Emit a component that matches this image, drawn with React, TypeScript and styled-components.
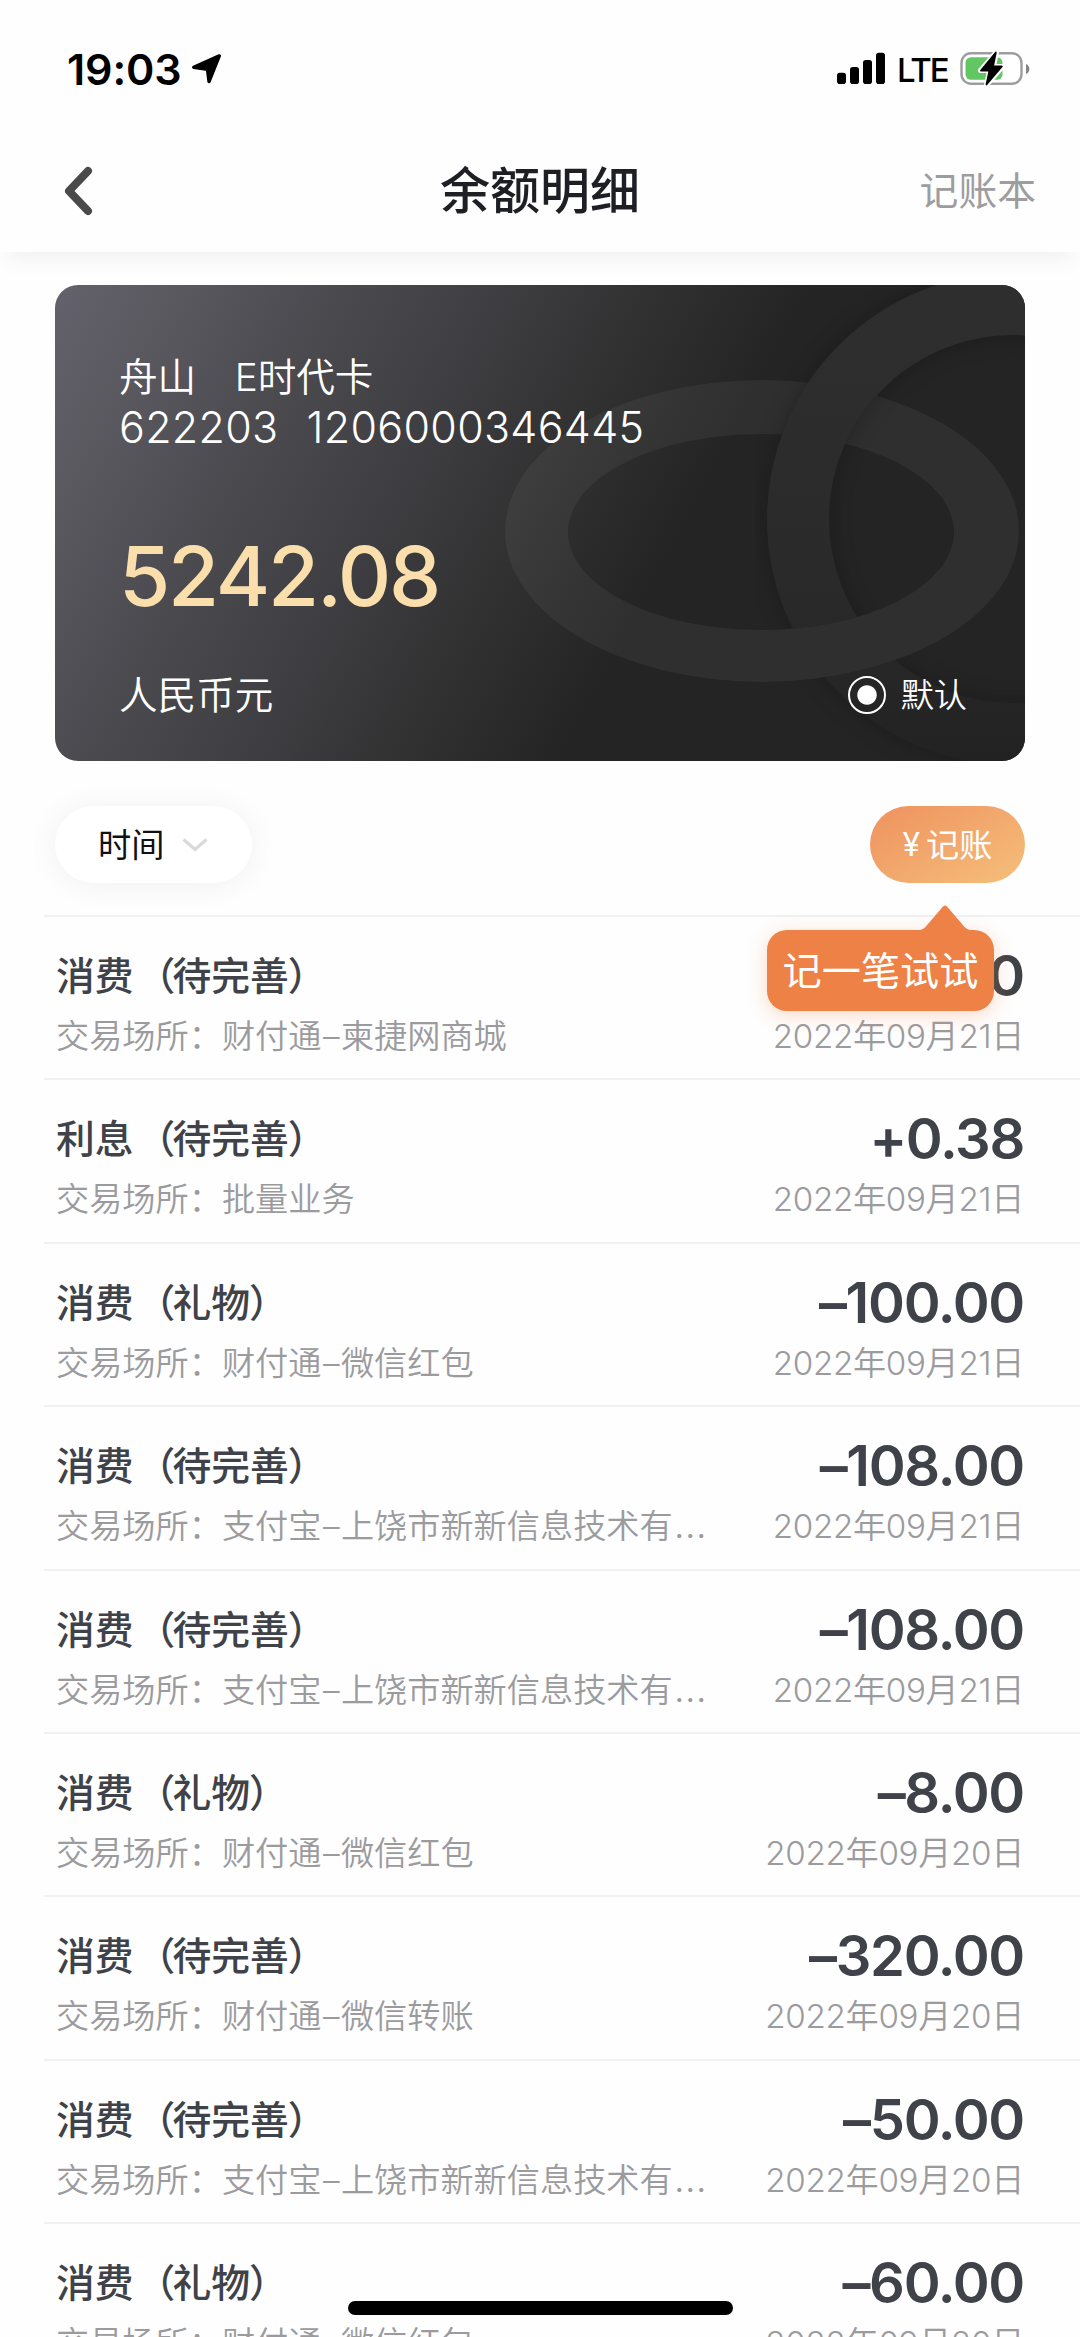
import React from "react";
import styled, { createGlobalStyle } from "styled-components";

const GlobalStyle = createGlobalStyle`
  html, body { margin: 0; padding: 0; background: #fefefe; }
  *, *::before, *::after { box-sizing: border-box; }
`;

const Screen = styled.main`
  width: 1080px;
  height: 2337px;
  position: relative;
  overflow: hidden;
  background: #fefefe;
  color: #3f4248;
  display: flex;
  flex-direction: column;
  font-family: Inter, "Noto Sans CJK SC", sans-serif;
  white-space: nowrap;
`;

const Header = styled.header`
  height: 252px;
  flex: none;
  position: relative;
  z-index: 1;
  background: #fefefe;
  box-shadow: 0 12px 24px -6px rgba(0, 0, 0, 0.06);
`;

const StatusBar = styled.div`
  height: 138px;
  padding: 0 48px 0 67px;
  display: flex;
  align-items: center;
  color: #000;
  svg { display: block; flex: none; }
`;

const Clock = styled.span`
  width: 125px;
  font-size: 43px;
  line-height: 60px;
  font-weight: 600;
  letter-spacing: -0.1px;
`;

const StatusIcons = styled.div`
  margin-left: auto;
  display: flex;
  align-items: center;
`;

const Network = styled.span`
  flex: none;
  width: 75px;
  padding: 2px 0 0 12px;
  font-size: 33px;
  line-height: 40px;
  font-weight: 500;
  letter-spacing: -2.2px;
`;

const NavBar = styled.nav`
  height: 106px;
  padding: 0 44px;
  display: grid;
  grid-template-columns: 1fr auto 1fr;
  align-items: center;
  svg { display: block; margin-left: 18px; }
`;

const NavTitle = styled.h1`
  margin: 0;
  font-size: 50px;
  line-height: 70px;
  font-weight: 500;
  color: #1e1f24;
`;

const NavAction = styled.span`
  justify-self: end;
  font-size: 38.8px;
  line-height: 60px;
  color: #9d9da0;
`;

const Card = styled.section`
  position: relative;
  flex: none;
  width: 970px;
  height: 476px;
  margin: 33px 0 0 55px;
  padding: 69px 58px 0 64px;
  border-radius: 23px;
  overflow: hidden;
  color: #fff;
  background: linear-gradient(118deg, #63626d 0%, #5b5a61 9%, #4b4a4f 23%, #3e3d41 37%, #333334 47%, #242424 62%, #242424 100%);
`;

const Rings = styled.svg`
  position: absolute;
  inset: 0;
`;

const CardBody = styled.div`
  position: relative;
  display: flex;
  flex-direction: column;
`;

const CardName = styled.div`
  font-size: 38.6px;
  line-height: 46px;
  font-weight: 350;
`;

const CardNumber = styled.div`
  display: flex;
  gap: 28px;
  font-size: 43px;
  line-height: 55px;
  font-weight: 340;
  letter-spacing: 0.3px;
`;

const Balance = styled.div`
  margin-top: 71px;
  font-size: 83px;
  line-height: 100px;
  font-weight: 500;
  letter-spacing: -2.2px;
  color: #fadfad;
`;

const CardFooter = styled.div`
  margin-top: 39px;
  height: 60px;
  display: flex;
  justify-content: space-between;
  align-items: center;
  font-size: 38.6px;
  line-height: 58px;
  font-weight: 350;
`;

const DefaultMark = styled.div`
  display: flex;
  align-items: center;
  gap: 15px;
  font-size: 33.2px;
`;

const Radio = styled.i`
  width: 38px;
  height: 38px;
  border: 2px solid #fff;
  border-radius: 50%;
  background: radial-gradient(circle, #fff 9.2px, transparent 10.2px);
`;

const Toolbar = styled.div`
  height: 154px;
  flex: none;
  padding: 45px 55px 0;
  display: flex;
  justify-content: space-between;
  align-items: flex-start;
`;

const TimeFilter = styled.button`
  width: 197px;
  height: 77px;
  padding: 0 0 0 43px;
  border: 0;
  border-radius: 39px;
  display: flex;
  align-items: center;
  gap: 18px;
  background: #fff;
  box-shadow: 0 2px 32px rgba(0, 0, 0, 0.06);
  font: 400 33.2px/50px Inter, "Noto Sans CJK SC", sans-serif;
  color: #111;
`;

const RecordButton = styled.div`
  position: relative;
  width: 155px;
  height: 77px;
  border-radius: 39px;
  display: flex;
  align-items: center;
  justify-content: center;
  gap: 6px;
  background: linear-gradient(150deg, #ef9460 5%, #f5bd79 95%);
  font-size: 33.2px;
  line-height: 76px;
  color: #fff;
`;

const Yen = styled.span`
  font-size: 32px;
`;

const Tip = styled.div`
  position: absolute;
  z-index: 2;
  left: -103px;
  top: 124px;
  width: 227px;
  height: 81px;
  border-radius: 20px;
  background: #ee8145;
  display: flex;
  align-items: center;
  justify-content: center;
  font-size: 39.2px;
  line-height: 82px;
  box-shadow: 0 4px 20px rgba(238, 129, 69, 0.3);
`;

const TipArrow = styled.svg`
  position: absolute;
  left: 150px;
  top: -25px;
`;

const List = styled.ul`
  margin: 0 0 0 44px;
  padding: 0;
  list-style: none;
`;

const Row = styled.li`
  height: 163.4px;
  padding: 29px 56px 0 12px;
  border-top: 2px solid #f1f1f2;
`;

const Line = styled.div`
  height: 60px;
  display: flex;
  justify-content: space-between;
  align-items: center;
  line-height: 60px;
`;

const Kind = styled.span`
  font-size: 38.8px;
  font-weight: 500;
`;

const Paren = styled.span<{ $shift: number }>`
  margin: 0 ${(p) => -p.$shift}px 0 ${(p) => p.$shift}px;
`;

const Amount = styled.span`
  font-size: 56px;
  line-height: 58px;
  font-weight: 570;
  letter-spacing: -1.3px;
`;

const Place = styled.span`
  font-size: 33.2px;
  font-weight: 350;
  color: #9b9b9e;
`;

const Dash = styled.span`
  margin: 0 1.4px;
`;

const Ellipsis = styled.span`
  margin-left: 1px;
  font-size: 39px;
  line-height: 1;
`;

const DateText = styled(Place)`
  letter-spacing: -0.35px;
`;

const HomeIndicator = styled.div`
  position: absolute;
  left: 348px;
  bottom: 22px;
  width: 385px;
  height: 14px;
  border-radius: 7px;
  background: #000;
`;

type Entry = {
  kind: string;
  tag: string;
  channel?: string;
  merchant: string;
  clipped?: boolean;
  amount: string;
  date: string;
};

const records: Entry[] = [
  { kind: "消费", tag: "待完善", channel: "财付通", merchant: "柬捷网商城", amount: "0", date: "2022年09月21日" },
  { kind: "利息", tag: "待完善", merchant: "批量业务", amount: "+0.38", date: "2022年09月21日" },
  { kind: "消费", tag: "礼物", channel: "财付通", merchant: "微信红包", amount: "–100.00", date: "2022年09月21日" },
  { kind: "消费", tag: "待完善", channel: "支付宝", merchant: "上饶市新新信息技术有", clipped: true, amount: "–108.00", date: "2022年09月21日" },
  { kind: "消费", tag: "待完善", channel: "支付宝", merchant: "上饶市新新信息技术有", clipped: true, amount: "–108.00", date: "2022年09月21日" },
  { kind: "消费", tag: "礼物", channel: "财付通", merchant: "微信红包", amount: "–8.00", date: "2022年09月20日" },
  { kind: "消费", tag: "待完善", channel: "财付通", merchant: "微信转账", amount: "–320.00", date: "2022年09月20日" },
  { kind: "消费", tag: "待完善", channel: "支付宝", merchant: "上饶市新新信息技术有", clipped: true, amount: "–50.00", date: "2022年09月20日" },
  { kind: "消费", tag: "礼物", channel: "财付通", merchant: "微信红包", amount: "–60.00", date: "2022年09月20日" },
];

const OVAL =
  "M450 246a257 151 0 1 0 514 0a257 151 0 1 0 -514 0ZM513 247a193 98 0 1 0 386 0a193 98 0 1 0 -386 0Z";

const CardRings = () => (
  <Rings width="970" height="476" viewBox="0 0 970 476">
    <defs>
      <clipPath id="lowerHalf">
        <rect x="600" y="300" width="370" height="176" />
      </clipPath>
      <clipPath id="upperHalf">
        <rect x="600" y="0" width="370" height="300" />
      </clipPath>
      <mask id="circleMask">
        <rect width="970" height="476" fill="#fff" />
        <path d={OVAL} fillRule="evenodd" fill="#000" clipPath="url(#lowerHalf)" />
      </mask>
      <mask id="ovalMask">
        <rect width="970" height="476" fill="#fff" />
        <circle cx="958" cy="234" r="215" fill="none" stroke="#000" strokeWidth="62" clipPath="url(#upperHalf)" />
      </mask>
      <linearGradient id="fade" gradientUnits="userSpaceOnUse" x1="0" y1="0" x2="0" y2="476">
        <stop offset="0.1" stopColor="#2e2e2e" />
        <stop offset="0.6" stopColor="#2a2a2a" />
        <stop offset="0.8" stopColor="#272727" />
        <stop offset="1" stopColor="#222223" />
      </linearGradient>
      <filter id="soft" x="-30%" y="-30%" width="160%" height="160%">
        <feGaussianBlur stdDeviation="10" />
      </filter>
    </defs>
    <path fillRule="evenodd" fill="#fff" fillOpacity="0.05" mask="url(#ovalMask)" d={OVAL} />
    <g mask="url(#circleMask)">
      <circle cx="958" cy="234" r="215" fill="none" stroke="#000" strokeOpacity="0.2" strokeWidth="66" filter="url(#soft)" />
      <circle cx="958" cy="234" r="215" fill="none" stroke="url(#fade)" strokeWidth="62" />
    </g>
  </Rings>
);

const App = () => (
  <Screen>
    <GlobalStyle />
    <Header>
      <StatusBar>
        <Clock>19:03</Clock>
        <svg width="30" height="32" viewBox="0 0 30 32">
          <path d="M27.300 2.900L17 28.500L15.500 16.200L1.700 14.200Z" fill="#000" stroke="#000" strokeWidth="3.400" strokeLinejoin="round" />
        </svg>
        <StatusIcons>
          <svg width="48" height="34" viewBox="0 0 48 34">
            <rect x="0" y="20.700" width="9" height="11.300" rx="2.800" />
            <rect x="13" y="15" width="9" height="17" rx="2.800" />
            <rect x="26" y="8" width="9" height="24" rx="2.800" />
            <rect x="39" y="0.800" width="9" height="31.200" rx="2.800" />
          </svg>
          <Network>LTE</Network>
          <svg width="72" height="38" viewBox="0 0 72 38">
            <rect x="1.500" y="3.200" width="60" height="30.600" rx="9.500" fill="#fff" stroke="#9d9d9f" strokeWidth="2.400" />
            <rect x="5.500" y="7.200" width="37" height="22.600" rx="5.500" fill="#62c763" />
            <path d="M66 14C70.500 15.500 70.500 22.500 66 24Z" fill="#858587" />
            <path d="M36.500 2L20.500 20.500H29.500L26.500 35L42.500 16.500H33.500Z" fill="#000" stroke="#fff" strokeWidth="5" strokeLinejoin="round" />
            <path d="M35.800 2.500L21 20.500H29.500L26.500 34.500L41.800 16.500H33Z" fill="#000" stroke="#000" strokeWidth="1.800" strokeLinejoin="round" />
          </svg>
        </StatusIcons>
      </StatusBar>
      <NavBar>
        <svg width="34" height="54" viewBox="0 0 34 54">
          <path d="M26 7L7 27L26 47" fill="none" stroke="#4a4a4a" strokeWidth="8" strokeLinecap="round" strokeLinejoin="round" />
        </svg>
        <NavTitle>余额明细</NavTitle>
        <NavAction>记账本</NavAction>
      </NavBar>
    </Header>

    <Card>
      <CardRings />
      <CardBody>
        <CardName>舟山　E时代卡</CardName>
        <CardNumber>
          <span>622203</span>
          <span>1206000346445</span>
        </CardNumber>
        <Balance>5242.08</Balance>
        <CardFooter>
          <span>人民币元</span>
          <DefaultMark>
            <Radio />
            <span>默认</span>
          </DefaultMark>
        </CardFooter>
      </CardBody>
    </Card>

    <Toolbar>
      <TimeFilter>
        时间
        <svg width="26" height="16" viewBox="0 0 26 16">
          <path d="M1.500 2.500L13 12.500L24.500 2.500" fill="none" stroke="#d9d9da" strokeWidth="3.200" />
        </svg>
      </TimeFilter>
      <RecordButton>
        <Yen>¥</Yen>
        <span>记账</span>
        <Tip>
          <TipArrow width="56" height="26" viewBox="0 0 56 26">
            <path d="M0 26C5 25 8 23 11 19L26 1.500Q28 -0.500 30 1.500L45 19C48 23 51 25 56 26Z" fill="#ee8145" />
          </TipArrow>
          记一笔试试
        </Tip>
      </RecordButton>
    </Toolbar>

    <List>
      {records.map((r, i) => (
        <Row key={i}>
          <Line>
            <Kind>
              {r.kind}
              <Paren $shift={3}>（</Paren>
              {r.tag}
              <Paren $shift={-1}>）</Paren>
            </Kind>
            <Amount>{r.amount}</Amount>
          </Line>
          <Line>
            <Place>
              交易场所：{r.channel}
              {r.channel && <Dash>–</Dash>}
              {r.merchant}
              {r.clipped && <Ellipsis>…</Ellipsis>}
            </Place>
            <DateText>{r.date}</DateText>
          </Line>
        </Row>
      ))}
    </List>
    <HomeIndicator />
  </Screen>
);

export default App;
